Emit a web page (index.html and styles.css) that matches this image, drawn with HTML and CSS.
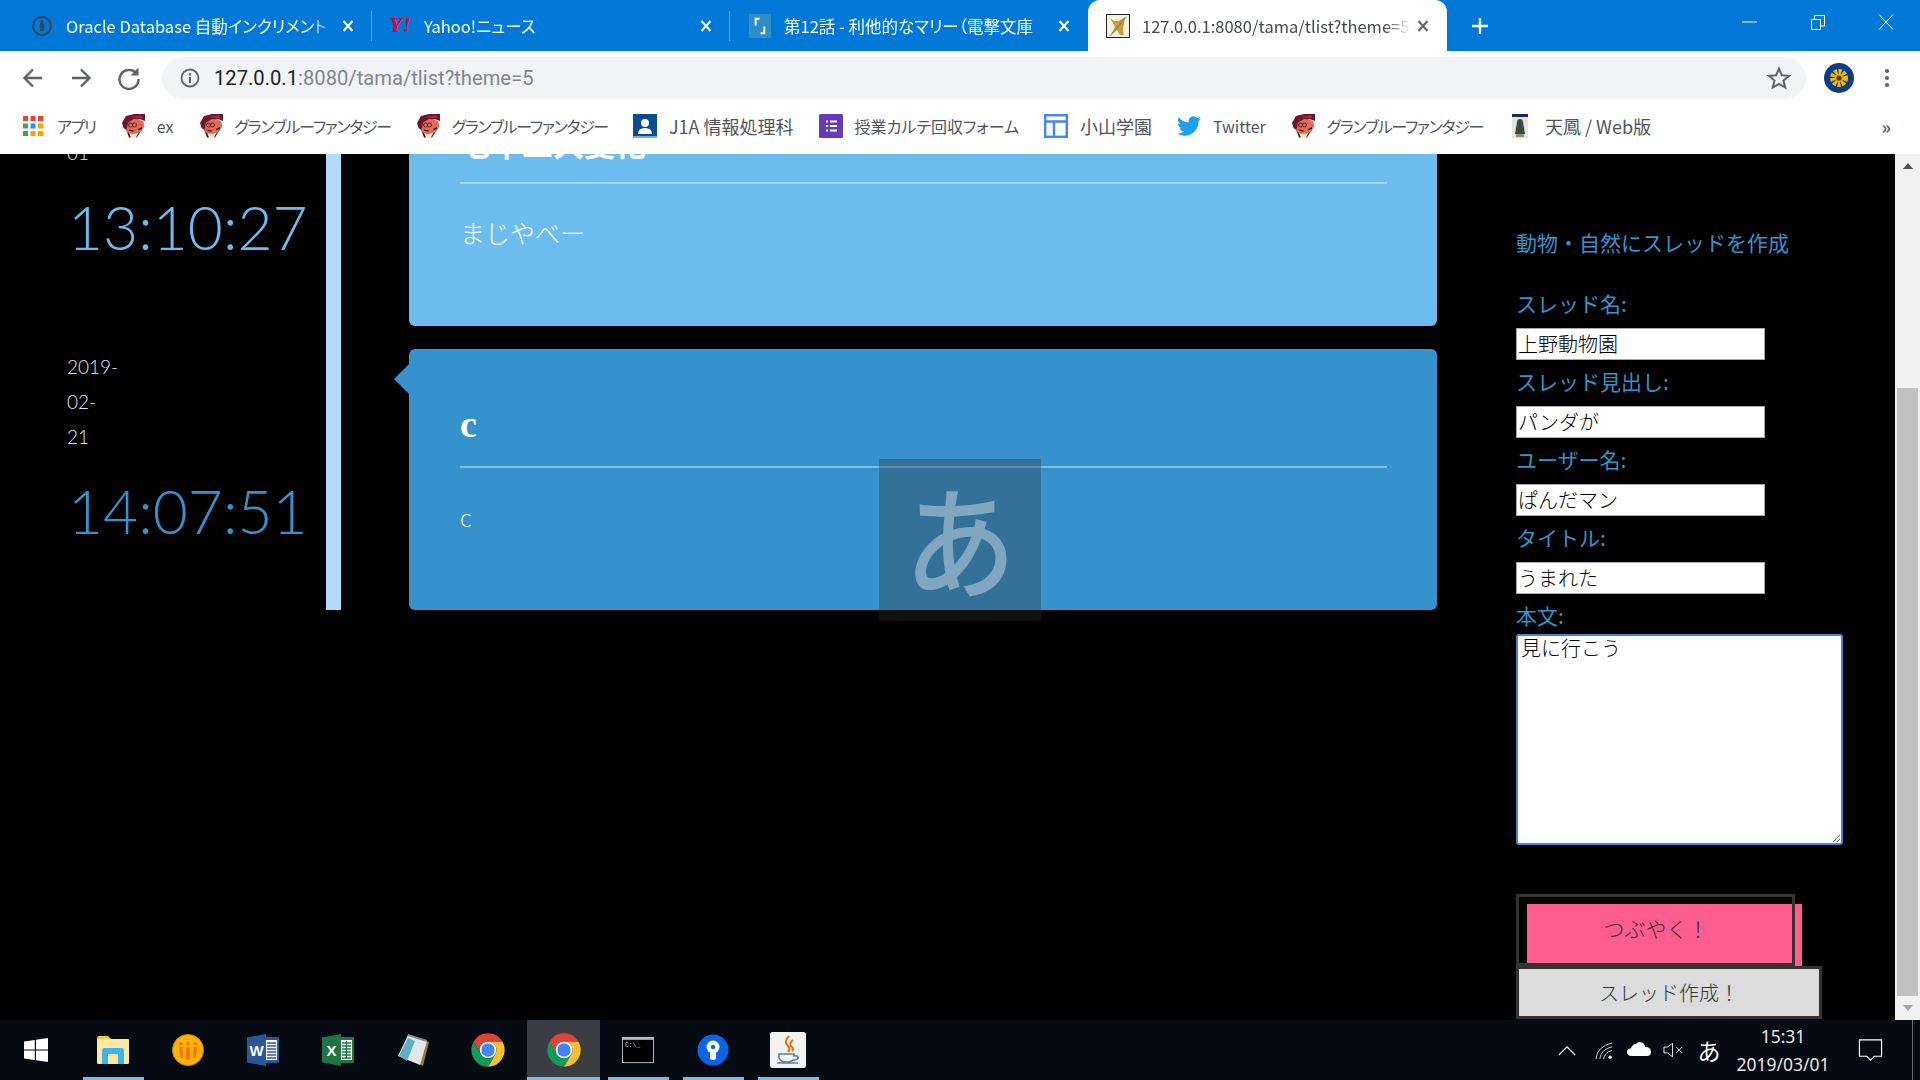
FILE: index.html
```html
<!DOCTYPE html>
<html lang="ja">
<head>
<meta charset="utf-8">
<title>127.0.0.1:8080/tama/tlist?theme=5</title>
<link rel="stylesheet" href="styles.css">
</head>
<body>
<svg class="defs" width="0" height="0">
  <symbol id="gbf" viewBox="0 0 24 24">
    <path fill="#df6c58" d="M4 9L13 4L22 7L23.500 12L20 18L15 21H9L5 17z"/>
    <path fill="#6f1430" d="M1 9L5 2L13 0H24V7L20 5.500L13 5L7 8.500L5.500 16L2.500 14z"/>
    <path fill="#a8324a" d="M8 3L20 1.500L22 4L13 3.500z"/>
    <circle cx="9.500" cy="11" r="2" fill="none" stroke="#5a2418" stroke-width="1"/>
    <circle cx="13.500" cy="11" r="2" fill="none" stroke="#5a2418" stroke-width="1"/>
    <path fill="#2e1414" d="M8 15.500l5 1-1 1.200-4-1.200zM17 15l4-2v2l-3.500 1.200z"/>
    <path fill="#efe3c4" d="M8 19Q13 21.500 18 18L16 23.500H10z"/>
    <path fill="#3a1c14" d="M6 18L8 19L10 23.500H8zM18 18L19 18.500L16 23.500H15z"/>
  </symbol>
  <symbol id="chrome" viewBox="0 0 48 48">
    <path fill="#db4437" d="M24 4A20 20 0 0 0 6.700 14L15.300 29A10 10 0 0 1 24 14H41.300A20 20 0 0 0 24 4z"/>
    <path fill="#fbc02d" d="M41.300 14H24A10 10 0 0 1 32.700 29L24 44A20 20 0 0 0 41.300 14z"/>
    <path fill="#0f9d58" d="M6.700 14A20 20 0 0 0 24 44L32.700 29A10 10 0 0 1 15.300 29z"/>
    <circle cx="24" cy="24" r="10" fill="#fff"/>
    <circle cx="24" cy="24" r="8" fill="#4285f4"/>
  </symbol>
  <symbol id="x" viewBox="0 0 12 12">
    <path d="M1.500 1L10.500 11M10.500 1L1.500 11" fill="none" stroke="currentColor" stroke-width="2"/>
  </symbol>
</svg>

<header class="tabstrip">
  <div class="tab tab-sep">
    <svg class="favicon" viewBox="0 0 20 20"><circle cx="10" cy="10" r="9" fill="none" stroke="#37474f" stroke-width="2"/><path fill="#37474f" d="M10 3Q13 8 12 15H8Q7 8 10 3z"/></svg>
    <span class="tab-title">Oracle Database 自動インクリメント</span>
    <svg class="tab-close"><use href="#x"/></svg>
  </div>
  <div class="tab tab-sep">
    <svg class="favicon favicon-yahoo" viewBox="0 0 24 20"><text x="0" y="16" class="yahoo-mark">Y!</text></svg>
    <span class="tab-title">Yahoo!ニュース</span>
    <svg class="tab-close"><use href="#x"/></svg>
  </div>
  <div class="tab">
    <svg class="favicon favicon-wide" viewBox="0 0 23 25"><rect width="23" height="25" fill="#2f8fc4"/><path d="M6 4V12H8V6H11V4zM17 21V13H15V19H12V21z" fill="#fff"/></svg>
    <span class="tab-title">第12話 - 利他的なマリー（電撃文庫</span>
    <svg class="tab-close"><use href="#x"/></svg>
  </div>
  <div class="tab tab-active">
    <svg class="favicon favicon-wide" viewBox="0 0 24 24"><rect x=".5" y=".5" width="23" height="23" fill="#f7f1e4" stroke="#222"/><path fill="#c99a3e" d="M4 4L8 7H13L19 3L18 10Q16 15 18 21H14L11 16L5 21L9 13z"/><path fill="#5a4a2a" d="M3 22L20 2L21 3L5 22z" opacity=".35"/></svg>
    <span class="tab-title">127.0.0.1:8080/tama/tlist?theme=5</span>
    <svg class="tab-close"><use href="#x"/></svg>
  </div>
  <svg class="new-tab" viewBox="0 0 18 18"><path d="M9 1V17M1 9H17" stroke="#fff" stroke-width="2.400"/></svg>
  <div class="window-controls">
    <svg class="win-btn" viewBox="0 0 16 16"><path d="M0 8H15" stroke="#fff" stroke-width="1"/></svg>
    <svg class="win-btn" viewBox="0 0 16 16"><path d="M1.500 5.500H10.500V15.500H1.500zM4.500 5V1.500H14.500V12H11" fill="none" stroke="#fff"/></svg>
    <svg class="win-btn" viewBox="0 0 16 16"><path d="M1 .5L15 15.500M15 .5L1 15.500" stroke="#fff" fill="none"/></svg>
  </div>
</header>

<nav class="toolbar">
  <svg class="nav-btn" viewBox="0 0 48 30"><path d="M33 15H16M24 6.500L15.500 15L24 23.500" fill="none" stroke="#5f6368" stroke-width="2.400"/></svg>
  <svg class="nav-btn" viewBox="0 0 48 30"><path d="M15 15H32M24 6.500L32.500 15L24 23.500" fill="none" stroke="#5f6368" stroke-width="2.400"/></svg>
  <svg class="nav-btn" viewBox="0 0 48 30"><path d="M31 10A9.500 9.500 0 1 0 33.500 16" fill="none" stroke="#5f6368" stroke-width="2.400"/><path d="M33.500 4.500V12.500H25.500z" fill="#5f6368"/></svg>
  <div class="omnibox">
    <svg class="info-icon" viewBox="0 0 20 20"><circle cx="10" cy="10" r="8.500" fill="none" stroke="#5f6368" stroke-width="1.800"/><path d="M10 9V15M10 5.200V7.400" stroke="#5f6368" stroke-width="2"/></svg>
    <span class="url"><span class="url-host">127.0.0.1</span>:8080/tama/tlist?theme=5</span>
    <svg class="star-icon" viewBox="0 0 24 24"><path d="M12 2.600L14.800 9.200L22 9.800L16.500 14.500L18.200 21.500L12 17.800L5.800 21.500L7.500 14.500L2 9.800L9.200 9.200z" fill="none" stroke="#5f6368" stroke-width="2"/></svg>
  </div>
  <div class="avatar-btn">
    <svg class="avatar" viewBox="0 0 30 30"><circle cx="15" cy="15" r="15" fill="#0a3d86"/><circle cx="15" cy="15" r="6.500" fill="none" stroke="#f2b90f" stroke-width="5" stroke-dasharray="3 1.200"/><circle cx="15" cy="15" r="4.500" fill="#e9a90c"/><circle cx="15" cy="15" r="2.600" fill="#5a3a12"/></svg>
  </div>
  <svg class="nav-btn" viewBox="0 0 48 30"><circle cx="24" cy="8" r="2.100" fill="#5f6368"/><circle cx="24" cy="15" r="2.100" fill="#5f6368"/><circle cx="24" cy="22" r="2.100" fill="#5f6368"/></svg>
</nav>

<div class="bookmarks">
  <a class="bm">
    <svg class="bm-icon bm-icon-apps" viewBox="0 0 20 20"><g fill="#ea4335"><rect width="5" height="5"/><rect x="7.500" width="5" height="5"/><rect x="15" width="5" height="5"/></g><rect y="7.500" width="5" height="5" fill="#34a853"/><rect x="7.500" y="7.500" width="5" height="5" fill="#2196f3"/><rect x="15" y="7.500" width="5" height="5" fill="#ffa000"/><rect y="15" width="5" height="5" fill="#34a853"/><rect x="7.500" y="15" width="5" height="5" fill="#ffa000"/><rect x="15" y="15" width="5" height="5" fill="#ffa000"/></svg>
    <span class="bm-kana">アプリ</span>
  </a>
  <a class="bm"><svg class="bm-icon"><use href="#gbf"/></svg><span>ex</span></a>
  <a class="bm"><svg class="bm-icon"><use href="#gbf"/></svg><span class="bm-kana">グランブルーファンタジー</span></a>
  <a class="bm"><svg class="bm-icon"><use href="#gbf"/></svg><span class="bm-kana">グランブルーファンタジー</span></a>
  <a class="bm">
    <svg class="bm-icon" viewBox="0 0 24 24"><rect width="24" height="24" fill="#0b4d8c"/><rect y="22" width="24" height="2" fill="#7fa8cf"/><circle cx="12" cy="9" r="4" fill="#fff"/><path d="M5 20Q5 14 12 14Q19 14 19 20z" fill="#fff"/></svg>
    <span class="bm-kanji">J1A 情報処理科</span>
  </a>
  <a class="bm">
    <svg class="bm-icon" viewBox="0 0 24 24"><rect width="24" height="24" rx="1.500" fill="#673ab7"/><path d="M7 7.500H9M11 7.500H18M7 12H9M11 12H18M7 16.500H9M11 16.500H18" stroke="#fff" stroke-width="2"/></svg>
    <span>授業カルテ回収フォーム</span>
  </a>
  <a class="bm">
    <svg class="bm-icon" viewBox="0 0 24 24"><rect x="1.200" y="1.200" width="21.600" height="21.600" fill="#fff" stroke="#4285f4" stroke-width="2.400"/><path d="M1 7.500H23M10 7.500V23" stroke="#4285f4" stroke-width="2.400"/></svg>
    <span class="bm-kanji">小山学園</span>
  </a>
  <a class="bm">
    <svg class="bm-icon" viewBox="0 0 24 24"><path fill="#1da1f2" d="M24 4.600a9.800 9.800 0 0 1-2.800.8 4.900 4.900 0 0 0 2.100-2.700 9.800 9.800 0 0 1-3.100 1.200 4.900 4.900 0 0 0-8.400 4.500A14 14 0 0 1 1.700 3.200a4.900 4.900 0 0 0 1.500 6.600 4.900 4.900 0 0 1-2.200-.6v.1a4.900 4.900 0 0 0 3.900 4.800 4.900 4.900 0 0 1-2.200.1 4.900 4.900 0 0 0 4.600 3.400A9.900 9.900 0 0 1 0 19.600a14 14 0 0 0 7.500 2.200c9 0 14-7.500 14-14v-.6A10 10 0 0 0 24 4.600z"/></svg>
    <span>Twitter</span>
  </a>
  <a class="bm"><svg class="bm-icon"><use href="#gbf"/></svg><span class="bm-kana">グランブルーファンタジー</span></a>
  <a class="bm bm-tenhou">
    <svg class="bm-icon bm-icon-narrow" viewBox="0 0 16 24"><rect width="16" height="24" fill="#e4e4dc"/><rect width="16" height="3" fill="#1c2a55"/><path d="M5 8a3 3 0 0 1 6 0L13 20H3z" fill="#3b4a44"/><rect x="4" y="20" width="8" height="3" fill="#8c8c80"/></svg>
    <span class="bm-kanji">天鳳 / Web版</span>
  </a>
  <span class="bm-more">»</span>
</div>

<div class="viewport">
  <main class="page">
    <section class="timeline">
      <div class="stamps">
        <div class="stamp stamp-light">
          <div class="stamp-date">2019-<br>03-<br>01</div>
          <div class="stamp-time">13:10:27</div>
        </div>
        <div class="stamp stamp-dark">
          <div class="stamp-date">2019-<br>02-<br>21</div>
          <div class="stamp-time">14:07:51</div>
        </div>
      </div>
      <div class="cards">
        <article class="card card-light">
          <h2 class="card-head card-head-jp">七十二大変化</h2>
          <p class="card-body">まじやべー</p>
        </article>
        <article class="card card-dark">
          <h2 class="card-head">c</h2>
          <p class="card-body">c</p>
        </article>
      </div>
    </section>
    <form class="thread-form">
      <h3 class="form-title">動物・自然にスレッドを作成</h3>
      <label class="field-label field-first">スレッド名:</label>
      <input class="field" value="上野動物園">
      <label class="field-label">スレッド見出し:</label>
      <input class="field" value="パンダが">
      <label class="field-label">ユーザー名:</label>
      <input class="field" value="ぱんだマン">
      <label class="field-label">タイトル:</label>
      <input class="field" value="うまれた">
      <label class="field-label field-label-tight">本文:</label>
      <textarea class="field-area">見に行こう</textarea>
      <div class="tweet-frame"><button type="button" class="btn-tweet">つぶやく！</button></div>
      <button type="button" class="btn-create">スレッド作成！</button>
    </form>
  </main>
  <aside class="scrollbar">
    <div class="sb-arrow"><span class="tri-up"></span></div>
    <div class="sb-track"><div class="sb-thumb"></div></div>
    <div class="sb-arrow"><span class="tri-down"></span></div>
  </aside>
  <div class="ime-toast"><span class="ime-glyph">あ</span></div>
</div>

<footer class="taskbar">
  <div class="start">
    <svg class="start-icon" viewBox="0 0 24 24"><path fill="#fff" d="M0 3.600L10.800 2V11.400H0zM12 1.800L24 0V11.400H12zM0 12.600H10.800V22L0 20.400zM12 12.600H24V24L12 22.200z"/></svg>
  </div>
  <div class="task task-run">
    <svg class="task-icon" viewBox="0 0 32 28"><path fill="#f3c94a" d="M0 2Q0 0 2 0H11L14 3H0z"/><path fill="#fde9a0" d="M0 3H31Q32 3 32 4V27Q32 28 31 28H1Q0 28 0 27z"/><path fill="#3db5ea" d="M5 28V14Q5 12 7 12H25Q27 12 27 14V28H21V18H11V28z"/></svg>
  </div>
  <div class="task">
    <svg class="task-icon task-icon-lg" viewBox="0 0 36 36"><circle cx="18" cy="18" r="17.500" fill="#ffb300" stroke="#b8860b"/><g fill="#f4701c"><circle cx="10" cy="11" r="2"/><circle cx="18" cy="11" r="2"/><circle cx="26" cy="11" r="2"/><path d="M8 15H12V27H10Q8 22 8 15zM16 15H20V29H16zM24 15H28Q28 22 26 27H24z"/></g></svg>
  </div>
  <div class="task">
    <svg class="task-icon task-icon-lg" viewBox="0 0 32 32"><rect x="14" y="3" width="18" height="26" rx="1" fill="#2b579a"/><path fill="#fff" d="M19 6H30V26H19z"/><path d="M20 9H29M20 12H29M20 15H29M20 18H29M20 21H29M20 24H29" stroke="#2b579a" stroke-width="1.300"/><path fill="#2b579a" d="M0 3.500L19 0V32L0 28.500z"/><text x="9.500" y="22" class="office-mark">W</text></svg>
  </div>
  <div class="task">
    <svg class="task-icon task-icon-lg" viewBox="0 0 32 32"><rect x="14" y="3" width="18" height="26" rx="1" fill="#217346"/><path fill="#fff" d="M19 6H30V26H19z"/><path d="M20 9H29M20 12H29M20 15H29M20 18H29M20 21H29M20 24H29M24.500 7V25" stroke="#217346" stroke-width="1.300"/><path fill="#217346" d="M0 3.500L19 0V32L0 28.500z"/><text x="9.500" y="22" class="office-mark">X</text></svg>
  </div>
  <div class="task">
    <svg class="task-icon task-icon-lg" viewBox="0 0 32 32"><path fill="#9a7a35" d="M12 2L32 8L26 32L22 30z"/><path fill="#dfe7e8" d="M11 1L30 7L23 31L1 22z"/><path fill="#5fb0c4" d="M11 4L18 7L10 27L2 22z"/><path fill="#8a8f92" d="M11 0L30 6L29.500 8L10.500 2z"/></svg>
  </div>
  <div class="task"><svg class="task-icon task-icon-chrome"><use href="#chrome"/></svg></div>
  <div class="task task-active task-run"><svg class="task-icon task-icon-chrome"><use href="#chrome"/></svg></div>
  <div class="task task-run">
    <svg class="task-icon task-icon-lg" viewBox="0 0 33 27"><rect width="33" height="27" fill="#b5bcc0"/><rect x="1" y="3" width="31" height="23" fill="#000"/><text x="3" y="10.500" class="cmd-mark">C:\_</text></svg>
  </div>
  <div class="task task-run">
    <svg class="task-icon task-icon-lg" viewBox="0 0 32 32"><circle cx="16" cy="16" r="15.500" fill="#0b63e5"/><circle cx="16" cy="13" r="6.500" fill="#fff"/><path d="M13 15H19V25Q16 27 13 25z" fill="#fff"/><circle cx="16" cy="13" r="2.200" fill="#0b63e5"/></svg>
  </div>
  <div class="task task-run">
    <svg class="task-icon task-icon-java" viewBox="0 0 36 36"><rect width="36" height="36" rx="2.500" fill="#f2f3f1"/><path d="M19 4Q13 10 18 14Q21 17 18 20M23 8Q18 12 22 15Q24 17 22 19" fill="none" stroke="#e76f00" stroke-width="2"/><path d="M9 22H24V24Q28 23 28 26Q28 28 23 28Q21 30 16 30Q11 30 9 26zM7 31H28" fill="none" stroke="#5382a1" stroke-width="1.600"/></svg>
  </div>
  <div class="tray">
    <div class="tray-item tray-chev"><svg viewBox="0 0 20 12"><path d="M1 11L10 2L19 11" fill="none" stroke="#fff" stroke-width="1.300"/></svg></div>
    <div class="tray-item tray-wifi"><svg viewBox="0 0 20 20"><g fill="none" stroke="#d8d8d8"><path d="M1 19Q2 6 18 2"/><path d="M5 19Q6 9 18 6"/><path d="M9 19Q10 12 18 10"/></g><circle cx="16" cy="17" r="1.800" fill="#fff"/></svg></div>
    <div class="tray-item tray-cloud"><svg viewBox="0 0 24 16"><path fill="#fff" d="M5 15Q0 15 0 11Q0 7 4 7.500Q5 3 9 3Q11 0 15 1.500Q18 3 18 6Q24 6 24 11Q24 15 20 15z"/></svg></div>
    <div class="tray-item tray-speaker"><svg viewBox="0 0 22 16"><path d="M1 5H4.500L10 1V15L4.500 11H1z" fill="none" stroke="#f0f0f0"/><path d="M14 5L20 11M20 5L14 11" stroke="#f0f0f0"/></svg></div>
    <div class="tray-item tray-ime">あ</div>
    <div class="tray-item tray-clock"><span>15:31</span><span>2019/03/01</span></div>
    <div class="tray-item tray-notify"><svg viewBox="0 0 26 24"><path d="M1.500 1.500H24.500V18.500H17L13 22.500L9 18.500H1.500z" fill="none" stroke="#fff" stroke-width="1.200"/></svg></div>
    <div class="tray-desk"></div>
  </div>
</footer>
</body>
</html>
```

FILE: styles.css
```css
* { box-sizing: border-box; }
html, body { margin: 0; height: 100%; }
body {
  width: 1920px;
  height: 1080px;
  overflow: hidden;
  display: flex;
  flex-direction: column;
  background: #000;
  font-family: "Noto Sans CJK JP", "Noto Sans", sans-serif;
}
.defs { position: absolute; }

/* tabs */
.tabstrip {
  height: 51px;
  flex: none;
  display: flex;
  align-items: stretch;
  background: #0078d7;
  padding-left: 14px;
  color: #fff;
}
.tab {
  width: 358px;
  display: flex;
  align-items: center;
  padding: 0 18px;
  font-size: 16.5px;
  font-feature-settings: "palt";
  position: relative;
}
.tab-sep::after {
  content: "";
  position: absolute;
  right: 0;
  top: 11px;
  height: 30px;
  width: 1px;
  background: #5ba8e6;
}
.favicon { width: 20px; height: 20px; flex: none; margin-right: 14px; overflow: visible; }
.favicon-wide { width: 24px; height: 24px; margin-right: 12px; }
.favicon-yahoo { width: 24px; margin-left: -1px; margin-right: 11px; }
.yahoo-mark { font: italic bold 22px "Liberation Serif", serif; fill: #e60033; }
.tab-title {
  flex: 1;
  min-width: 0;
  white-space: nowrap;
  overflow: hidden;
  line-height: 24px;
  -webkit-mask-image: linear-gradient(to right, #000 calc(100% - 28px), transparent calc(100% - 2px));
  mask-image: linear-gradient(to right, #000 calc(100% - 28px), transparent calc(100% - 2px));
}
.tab-close { width: 12px; height: 12px; flex: none; margin-left: 4px; color: #fff; }
.tab-active {
  width: 359px;
  background: #fff;
  color: #45494d;
  border-radius: 12px 12px 0 0;
}
.tab-active .tab-close { color: #5f6368; }
.new-tab { width: 18px; height: 18px; align-self: center; margin-left: 24px; }
.window-controls { margin-left: auto; display: flex; align-items: center; gap: 52px; padding-right: 26px; margin-top: -7px; }
.win-btn { width: 16px; height: 16px; }

/* toolbar */
.toolbar {
  height: 51px;
  flex: none;
  display: flex;
  align-items: center;
  background: #fff;
  padding: 3px 0 0 9px;
}
.nav-btn { width: 48px; height: 30px; flex: none; }
.omnibox {
  width: 1644px;
  height: 42px;
  margin-left: 9px;
  border-radius: 21px;
  background: #f1f3f4;
  display: flex;
  align-items: center;
  padding: 0 15px 0 18px;
}
.info-icon { width: 20px; height: 20px; flex: none; }
.url {
  margin-left: 14px;
  font: 20.2px Roboto, sans-serif;
  color: #80868b;
  flex: 1;
}
.url-host { color: #202124; }
.star-icon { width: 24px; height: 24px; flex: none; }
.avatar-btn { width: 48px; margin-left: 9px; display: flex; justify-content: center; }
.avatar { width: 30px; height: 30px; }

/* bookmarks */
.bookmarks {
  height: 52px;
  flex: none;
  display: flex;
  align-items: center;
  background: #fff;
  padding: 0 0 4px 23px;
  gap: 25px;
  color: #50545a;
  font-size: 16px;
  font-feature-settings: "palt";
}
.bm { display: flex; align-items: center; gap: 12px; white-space: nowrap; }
.bm-icon { width: 24px; height: 24px; flex: none; }
.bm-icon-apps { width: 20px; height: 20px; margin-right: 2px; }
.bm-icon-narrow { width: 16px; margin-right: 5px; }
.bm-tenhou { margin-left: 4px; }
.bm-kana { letter-spacing: -1.3px; }
.bm-kanji { font-size: 18px; }
.bm-more { margin-left: auto; padding-right: 29px; font-size: 18px; color: #5f6368; font-weight: 700; }

/* page */
.viewport {
  flex: 1;
  min-height: 0;
  display: flex;
  background: #000;
  position: relative;
  overflow: hidden;
}
.page { flex: 1; display: flex; align-items: flex-start; overflow: hidden; height: 100%; }
.timeline {
  width: 1437px;
  flex: none;
  margin-top: -89px;
  display: flex;
  align-items: stretch;
}
.stamps {
  width: 341px;
  flex: none;
  border-right: 15px solid #b0dbfb;
  display: flex;
  flex-direction: column;
  gap: 23px;
  padding-left: 67px;
}
.stamp { height: 261px; font-family: Lato, sans-serif; font-weight: 300; }
.stamp-date { font-size: 19px; line-height: 35px; color: #d7ebf9; }
.stamp-time { margin-top: 21px; margin-left: 1px; font-size: 60.5px; line-height: 72px; white-space: nowrap; }
.stamp-light { color: #6cbcef; }
.stamp-dark { color: #3592cc; }
.cards {
  flex: 1;
  margin-left: 68px;
  display: flex;
  flex-direction: column;
  gap: 23px;
}
.card {
  height: 261px;
  padding: 0 50px 0 51px;
  border-radius: 6px;
  color: #fff;
  position: relative;
}
.card-light { background: #6cbcef; }
.card-dark { background: #3592cc; }
.card-dark::before {
  content: "";
  position: absolute;
  left: -15px;
  top: 15px;
  border-style: solid;
  border-width: 15px 15px 15px 0;
  border-color: transparent #3592cc transparent transparent;
}
.card-head {
  margin: 0;
  height: 119px;
  padding-top: 55px;
  font: 700 38px/40px "Liberation Serif", serif;
  border-bottom: 2px solid rgba(255, 255, 255, .4);
}
.card-head-jp { padding-top: 58px; font: 700 31px/40px "Noto Sans CJK JP", sans-serif; }
.card-body {
  margin: 32px 0 0;
  font: 300 25px/34px Lato, "Noto Sans CJK JP", sans-serif;
  color: #fff;
}

/* form */
.thread-form {
  margin-left: 79px;
  width: 340px;
  display: flex;
  flex-direction: column;
  align-items: flex-start;
  padding-top: 73px;
  color: #3592cc;
}
.form-title { margin: 0; font-size: 21px; line-height: 30px; font-weight: 400; white-space: nowrap; }
.field-label { display: block; margin: 6px 0 10px; font-size: 21px; line-height: 30px; }
.field-first { margin-top: 31px; }
.field-label-tight { margin-bottom: 4px; }
.field {
  width: 249px;
  height: 32px;
  padding: 0 1px 2px;
  border: 1px solid #a9a9a9;
  border-radius: 0;
  outline: 0;
  background: #fff;
  color: #000;
  font: 300 20px "Noto Sans CJK JP", sans-serif;
}
.field-area {
  display: block;
  width: 327px;
  height: 211px;
  padding: 0 3px;
  border: 2px solid #4a80d8;
  border-radius: 3px;
  outline: 0;
  background: #fff;
  color: #000;
  font: 300 20px/24px "Noto Sans CJK JP", sans-serif;
}
.tweet-frame {
  position: relative;
  width: 279px;
  height: 72px;
  margin-top: 49px;
  padding: 10px 0 0 11px;
}
.tweet-frame::after {
  content: "";
  position: absolute;
  inset: 0;
  border: 3px solid #333;
  pointer-events: none;
}
.btn-tweet {
  display: block;
  width: 275px;
  height: 62px;
  padding: 0 17px 15px 0;
  border: 0;
  background: #ff5c8f;
  color: #333;
  font: 300 21px "Noto Sans CJK JP", sans-serif;
}
.btn-create {
  display: block;
  width: 306px;
  height: 53px;
  padding: 0;
  border: 3px solid #333;
  background: #dcdcdc;
  color: #333;
  font: 300 20px "Noto Sans CJK JP", sans-serif;
}

/* scrollbar */
.scrollbar {
  width: 25px;
  flex: none;
  background: #f1f1f1;
  display: flex;
  flex-direction: column;
}
.sb-arrow { height: 24px; display: flex; align-items: center; justify-content: center; }
.tri-up { border: solid transparent; border-width: 0 5.5px 6px; border-bottom-color: #505050; }
.tri-down { border: solid transparent; border-width: 6px 5.5px 0; border-top-color: #a3a3a3; }
.sb-track { flex: 1; padding: 210px 2px 0; }
.sb-thumb { height: 608px; background: #c1c1c1; }

/* IME toast */
.ime-toast {
  position: absolute;
  left: 879px;
  top: 305px;
  width: 162px;
  height: 162px;
  background: rgba(48, 48, 48, .333);
  color: rgba(255, 255, 255, .38);
  font-size: 122px;
  font-weight: 500;
  line-height: 154px;
  text-align: center;
  overflow: hidden;
}
.ime-glyph { display: inline-block; transform: scaleX(.92); }

/* taskbar */
.taskbar {
  height: 60px;
  flex: none;
  display: flex;
  background: #060a12;
  color: #fff;
}
.start { width: 75px; display: flex; align-items: center; padding-left: 24px; }
.start-icon { width: 24px; height: 24px; }
.task {
  width: 75px;
  flex: none;
  display: flex;
  align-items: center;
  justify-content: center;
  position: relative;
}
.task-run::after {
  content: "";
  position: absolute;
  left: 8px;
  right: 6px;
  bottom: 0;
  height: 3px;
  background: #76b9ed;
}
.task-active { width: 73px; margin-left: 2px; background: #3a3d42; }
.task-active::after { left: 0; right: 0; }
.task-icon { width: 32px; height: 28px; overflow: visible; }
.task-icon-lg { width: 32px; height: 32px; }
.task-icon-chrome { width: 40px; height: 40px; }
.task-icon-java { width: 36px; height: 36px; }
.office-mark { font: 700 15px "Liberation Sans", sans-serif; fill: #fff; text-anchor: middle; }
.cmd-mark { font: 6.5px "Liberation Mono", monospace; fill: #d0d0d0; }
.tray { margin-left: auto; display: flex; align-items: stretch; }
.tray-item { display: flex; align-items: center; justify-content: center; }
.tray-chev { width: 36px; }
.tray-chev svg { width: 18px; height: 11px; }
.tray-wifi { width: 38px; }
.tray-wifi svg { width: 19px; height: 19px; }
.tray-cloud { width: 32px; margin-top: -2px; }
.tray-cloud svg { width: 24px; height: 16px; }
.tray-speaker { width: 36px; }
.tray-speaker svg { width: 21px; height: 16px; }
.tray-ime { width: 36px; font-size: 23px; }
.tray-clock {
  width: 112px;
  flex-direction: column;
  font: 17.5px/28px "Noto Sans", sans-serif;
  color: #e8e8e8;
}
.tray-notify { width: 62px; }
.tray-notify svg { width: 25px; height: 24px; }
.tray-desk { width: 19px; position: relative; }
.tray-desk::before {
  content: "";
  position: absolute;
  left: 11px;
  top: 0;
  bottom: 0;
  width: 1px;
  background: #6a6d70;
}
```
